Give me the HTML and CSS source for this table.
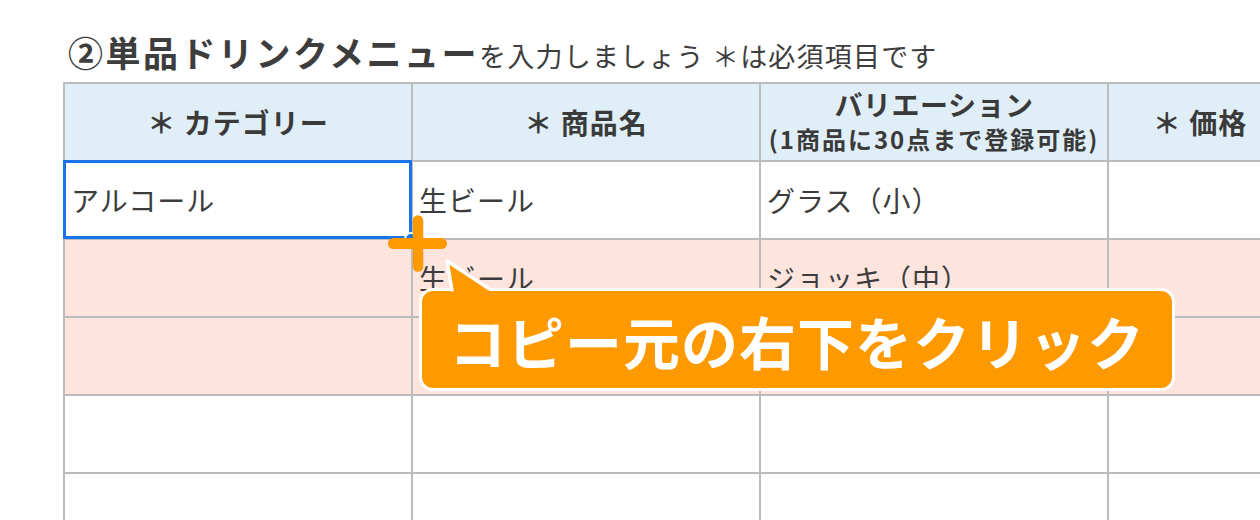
FILE: index.html
```html
<!DOCTYPE html>
<html lang="ja">
<head>
<meta charset="utf-8">
<title>単品ドリンクメニュー</title>
<link rel="stylesheet" href="styles.css">
</head>
<body>
<div class="page">
  <h1 class="title"><span class="title-main">②単品ドリンクメニュー</span><span class="title-sub">を入力しましょう ＊は必須項目です</span></h1>
  <div class="sheet">
    <div class="cell head">＊ カテゴリー</div>
    <div class="cell head">＊ 商品名</div>
    <div class="cell head two-line"><span class="head-main">バリエーション</span><span class="head-note">(1商品に30点まで登録可能)</span></div>
    <div class="cell head">＊ 価格（税込）</div>

    <div class="cell selected">アルコール</div>
    <div class="cell">生ビール</div>
    <div class="cell">グラス（小）</div>
    <div class="cell"></div>

    <div class="cell pink"></div>
    <div class="cell pink">生ビール</div>
    <div class="cell pink">ジョッキ（中）</div>
    <div class="cell pink"></div>

    <div class="cell pink"></div>
    <div class="cell pink"></div>
    <div class="cell pink"></div>
    <div class="cell pink"></div>

    <div class="cell"></div>
    <div class="cell"></div>
    <div class="cell"></div>
    <div class="cell"></div>

    <div class="cell"></div>
    <div class="cell"></div>
    <div class="cell"></div>
    <div class="cell"></div>
  </div>
</div>

<span class="fill-handle"></span>
<svg class="plus" width="64" height="62" viewBox="0 0 64 62" aria-hidden="true">
  <line x1="7.5" y1="30.5" x2="55.5" y2="30.5" stroke="#ff9900" stroke-width="11" stroke-linecap="round"/>
  <line x1="32" y1="7.5" x2="32" y2="53.5" stroke="#ff9900" stroke-width="10.5" stroke-linecap="round"/>
</svg>

<div class="callout">コピー元の右下をクリック</div>
<svg class="tail" width="60" height="42" viewBox="0 0 60 42" aria-hidden="true">
  <polygon points="7,7 12,40 54,40" fill="#ff9900"/>
  <polyline points="12,36 7,7 48,34" fill="none" stroke="#ffffff" stroke-width="3.5" stroke-linejoin="round" stroke-linecap="round"/>
</svg>
</body>
</html>
```

FILE: styles.css
```css
html, body {
  margin: 0;
  padding: 0;
  background: #ffffff;
}

body {
  position: relative;
  width: 1260px;
  height: 520px;
  overflow: hidden;
  font-family: "Noto Sans CJK JP", "Noto Sans", sans-serif;
  color: #3a3a3a;
}

.page {
  padding: 34px 0 0 63px;
}

.title {
  margin: 0 0 13px 5px;
  display: flex;
  align-items: baseline;
  height: 35px;
  line-height: 35px;
  white-space: nowrap;
}

.title-main {
  font-size: 35px;
  font-weight: 700;
  letter-spacing: 2.5px;
  color: #3d3d3d;
}

.title-sub {
  font-size: 27px;
  font-weight: 400;
  letter-spacing: 1.2px;
  color: #3d3d3d;
}

.sheet {
  display: grid;
  grid-template-columns: 346px 346px 346px 298px;
  grid-auto-rows: 76px;
  gap: 2px;
  width: max-content;
  background: #bcbcbc;
  border: 2px solid #bcbcbc;
}

.cell {
  position: relative;
  display: flex;
  align-items: center;
  padding: 0 0 0 6px;
  background: #ffffff;
  font-size: 28px;
  letter-spacing: 1px;
  color: #3c3c3c;
  white-space: nowrap;
  overflow: hidden;
}

.cell.pink {
  background: #fde4dd;
}

.cell.head {
  justify-content: center;
  padding: 0;
  background: #e0eef8;
  font-size: 28px;
  font-weight: 700;
  letter-spacing: 1px;
  color: #3a3a3a;
}

.cell.two-line {
  flex-direction: column;
  line-height: 1.3;
  padding-bottom: 4px;
}

.head-main {
  font-size: 28px;
  letter-spacing: 0.5px;
}

.head-note {
  font-size: 24px;
  letter-spacing: 2px;
}

.cell.selected {
  overflow: visible;
}

.cell.selected::after {
  content: "";
  position: absolute;
  top: -2px;
  left: -2px;
  right: -1px;
  bottom: -1px;
  border: 3px solid #1a73e8;
  pointer-events: none;
}

.fill-handle {
  position: absolute;
  left: 404px;
  top: 232px;
  width: 10px;
  height: 10px;
  border-radius: 50%;
  background: #1a73e8;
  border: 2px solid #ffffff;
}

.plus {
  position: absolute;
  left: 386px;
  top: 213px;
}

.callout {
  position: absolute;
  left: 419px;
  top: 288px;
  width: 756px;
  height: 103px;
  box-sizing: border-box;
  display: flex;
  align-items: center;
  justify-content: center;
  background: #ff9900;
  border: 3px solid #ffffff;
  border-radius: 14px;
  color: #ffffff;
  font-size: 57px;
  font-weight: 700;
  letter-spacing: 1px;
  white-space: nowrap;
}

.tail {
  position: absolute;
  left: 440px;
  top: 254px;
}
```
